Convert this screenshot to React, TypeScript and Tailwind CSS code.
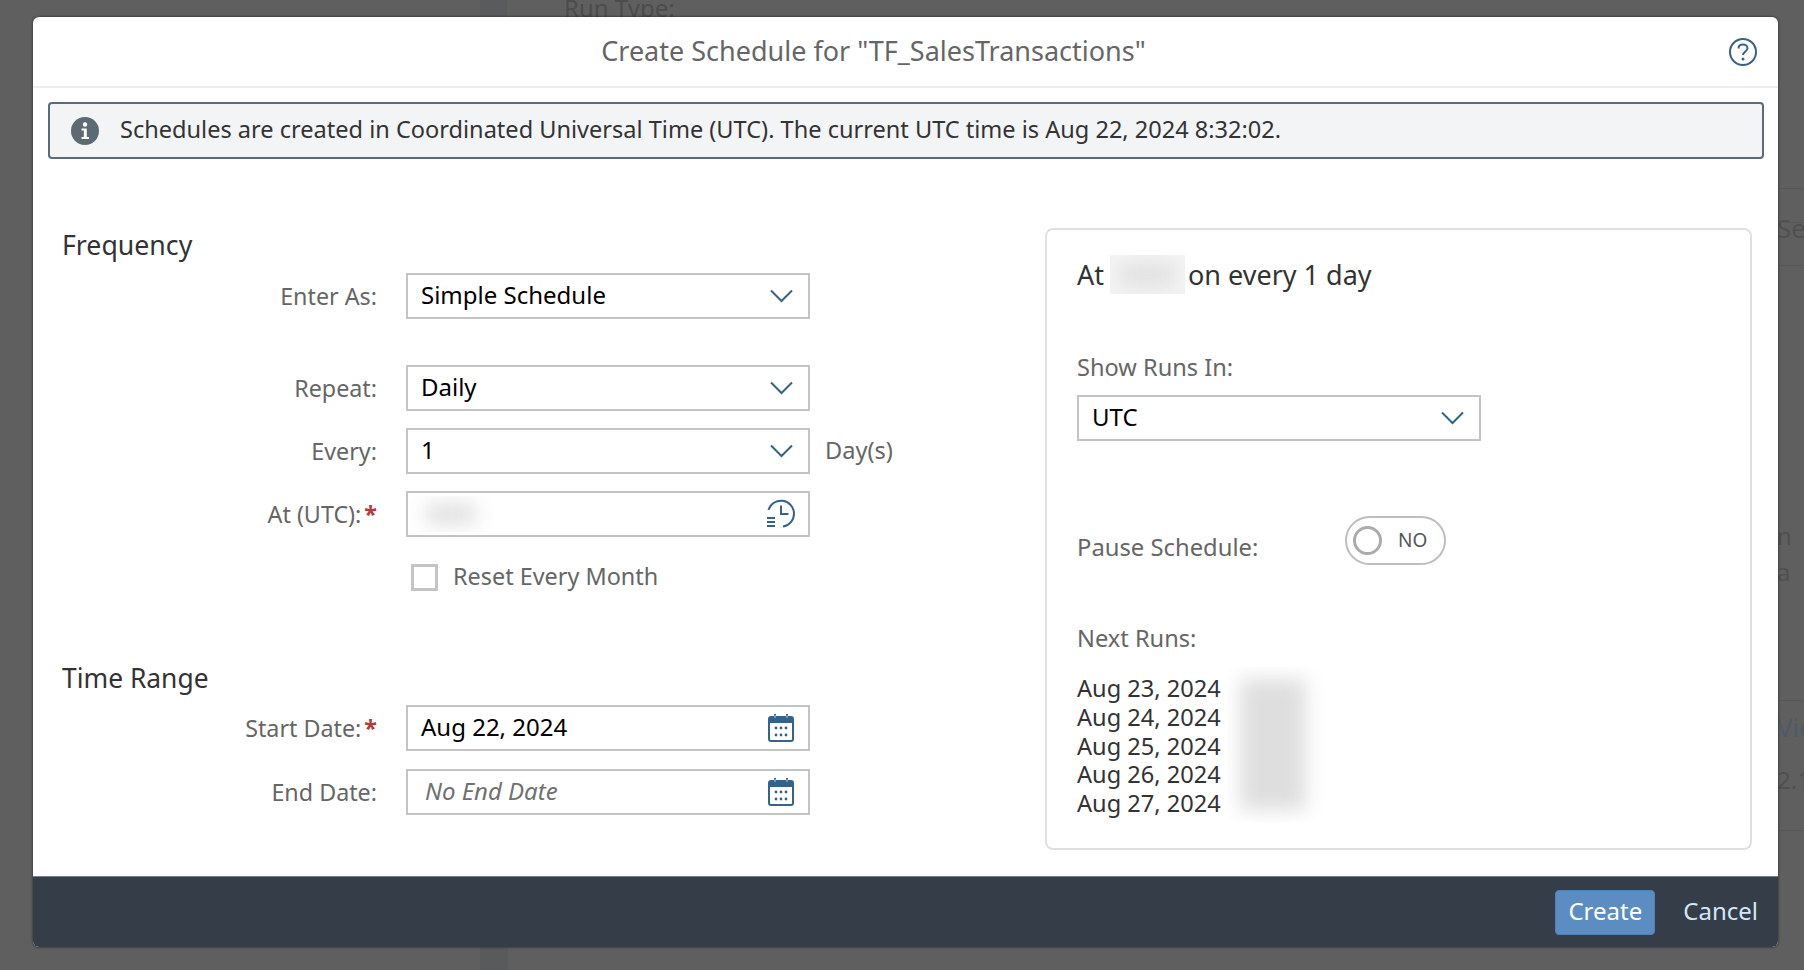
import type { ReactNode } from 'react'

const FONT = "font-['Noto_Sans',sans-serif]"

function Chevron() {
  return (
    <svg width="23" height="14" viewBox="0 0 23 14" fill="none" className="mr-[1px] shrink-0">
      <path d="M1 1.5 L11.5 12 L22 1.5" stroke="#33628d" strokeWidth="2" />
    </svg>
  )
}

function ClockIcon() {
  return (
    <svg width="30" height="30" viewBox="0 0 30 30" fill="none" className="mr-[-2px] shrink-0">
      <path d="M2.5 11 A13 13 0 1 1 17 27.5" stroke="#33628d" strokeWidth="2" />
      <path d="M15 6.5 V15 H22.5" stroke="#33628d" strokeWidth="2" />
      <path d="M1 19 H9 M1 23 H9 M1 27 H9" stroke="#33628d" strokeWidth="2" />
    </svg>
  )
}

function CalendarIcon() {
  const dots = [9, 14, 19]
  return (
    <svg width="28" height="30" viewBox="0 0 28 30" fill="none" className="mr-[-1px] shrink-0">
      <rect x="2" y="4" width="24" height="24" rx="2" stroke="#33628d" strokeWidth="2" />
      <rect x="2" y="4" width="24" height="6" fill="#33628d" />
      <path d="M8 1 V6 M20 1 V6" stroke="#33628d" strokeWidth="2" />
      <path d="M8 2 V5 M20 2 V5" stroke="#ffffff" strokeWidth="0.7" />
      {dots.map((x) => (
        <g key={x}>
          <circle cx={x} cy="15" r="1.4" fill="#33628d" />
          <circle cx={x} cy="22" r="1.4" fill="#33628d" />
        </g>
      ))}
    </svg>
  )
}

function Field({ children, icon }: { children?: ReactNode; icon: ReactNode }) {
  return (
    <div className="flex h-[46px] w-[404px] shrink-0 items-center justify-between border-2 border-[#c4c4c4] bg-white pl-[13px] pr-[14px] text-[24px] text-black">
      <span className="flex-1 pb-[2px]">{children}</span>
      {icon}
    </div>
  )
}

function Row({ label, required, children, className }: { label: string; required?: boolean; children: ReactNode; className?: string }) {
  return (
    <div className={`flex h-[46px] items-center ${className ?? ''}`}>
      <div className="flex w-[315px] shrink-0 items-center justify-end text-[23.3px] text-[#666666]">
        <span>{label}</span>
        {required && <span className="ml-[3px] font-bold text-[#b73a3a]">*</span>}
      </div>
      <div className="ml-[29px]">{children}</div>
    </div>
  )
}

function BlurPatch({ className, spot }: { className: string; spot: string }) {
  return (
    <div className={`overflow-hidden ${className}`}>
      <div className={`bg-[#dedede] blur-[10px] ${spot}`} />
    </div>
  )
}

const nextRuns = ['Aug 23, 2024', 'Aug 24, 2024', 'Aug 25, 2024', 'Aug 26, 2024', 'Aug 27, 2024']

export default function App() {
  return (
    <div className={`relative h-[970px] w-[1804px] overflow-hidden bg-[#5f5f5f] ${FONT}`}>
      {/* page behind the dialog */}
      <div className="absolute left-[480px] top-0 h-[17px] w-[27px] bg-[#595b5d]" />
      <div className="absolute left-[480px] top-[947px] h-[23px] w-[28px] bg-[#595a5b]" />
      <div className="absolute left-[564px] top-[-10px] text-[24px] text-[#4c4c4c]">Run Type:</div>
      <div className="absolute left-[1777px] top-[209px] text-[26px] text-[#505050]">Sea</div>
      <div className="absolute left-[1777px] top-[518px] text-[24px] text-[#505050]">n a</div>
      <div className="absolute left-[1777px] top-[708px] text-[26px] text-[#505a66]">View</div>
      <div className="absolute left-[1777px] top-[762px] text-[24px] text-[#505050]">2.1</div>
      <div className="absolute left-[1779px] top-[188px] h-px w-[25px] bg-[#585858]" />
      <div className="absolute left-[1779px] top-[222px] h-px w-[25px] bg-[#585858]" />
      <div className="absolute left-[1779px] top-[265px] h-px w-[25px] bg-[#585858]" />
      <div className="absolute left-[1779px] top-[700px] h-px w-[25px] bg-[#585858]" />
      <div className="absolute left-[1779px] top-[830px] h-px w-[25px] bg-[#585858]" />

      {/* dialog */}
      <div className="absolute left-[33px] top-[17px] flex h-[930px] w-[1745px] flex-col overflow-hidden rounded-[6px] bg-white shadow-[0_0_3px_rgba(0,0,0,0.6)]">
        <div className="relative flex h-[71px] shrink-0 items-center justify-center border-b-2 border-[#eeeeee] pr-[64px]">
          <h1 className="text-[27px] font-normal text-[#666666]">Create Schedule for "TF_SalesTransactions"</h1>
          <svg width="30" height="30" viewBox="0 0 30 30" fill="none" className="absolute right-[20px] top-[20px]">
            <circle cx="15" cy="15" r="13" stroke="#33628d" strokeWidth="2" />
            <path d="M10.5 11.5 C10.5 8.5 12.5 7.5 15 7.5 C17.5 7.5 19.5 9 19.5 11.3 C19.5 14.5 15 14.5 15 18" stroke="#33628d" strokeWidth="2" />
            <circle cx="15" cy="22" r="1.5" fill="#33628d" />
          </svg>
        </div>

        <div className="ml-[15px] mr-[14px] mt-[14px] flex h-[57px] shrink-0 items-center rounded-[4px] border-2 border-[#5d6b77] bg-[#f3f4f6] pl-[20px]">
          <svg width="30" height="30" viewBox="0 0 30 30" className="shrink-0">
            <circle cx="15" cy="15" r="14" fill="#5c6a74" />
            <circle cx="15" cy="8.5" r="2.2" fill="#ffffff" />
            <path d="M11.5 12.5 H16.8 V21 H19 V23 H11.5 V21 H13.8 V14.5 H11.5 Z" fill="#ffffff" />
          </svg>
          <span className="ml-[20px] pb-[2px] text-[23.55px] text-[#333333]">
            Schedules are created in Coordinated Universal Time (UTC). The current UTC time is Aug 22, 2024 8:32:02.
          </span>
        </div>

        <div className="flex flex-1 items-start pt-[69px]">
          <div className="w-[1012px] shrink-0 pl-[29px]">
            <h2 className="h-[34px] text-[26.7px] font-normal leading-[34px] text-[#333333]">Frequency</h2>
            <Row label="Enter As:" className="mt-[11px]">
              <Field icon={<Chevron />}>Simple Schedule</Field>
            </Row>
            <Row label="Repeat:" className="mt-[46px]">
              <Field icon={<Chevron />}>Daily</Field>
            </Row>
            <Row label="Every:" className="mt-[17px]">
              <div className="flex items-center">
                <Field icon={<Chevron />}>1</Field>
                <span className="ml-[15px] pb-[1px] text-[23.6px] text-[#666666]">Day(s)</span>
              </div>
            </Row>
            <Row label="At (UTC):" required className="mt-[17px]">
              <div className="relative">
                <Field icon={<ClockIcon />} />
                <BlurPatch
                  className="absolute left-[4px] top-[5px] h-[36px] w-[90px]"
                  spot="ml-[16px] mt-[8px] h-[20px] w-[50px]"
                />
              </div>
            </Row>
            <div className="mt-[17px] flex h-[46px] items-center pl-[349px]">
              <div className="h-[27px] w-[27px] border-[3px] border-[#c4c4c4]" />
              <span className="ml-[15px] text-[23.4px] text-[#666666]">Reset Every Month</span>
            </div>
            <h2 className="mt-[60px] h-[36px] text-[26.4px] font-normal leading-[36px] text-[#333333]">Time Range</h2>
            <Row label="Start Date:" required className="mt-[9px]">
              <Field icon={<CalendarIcon />}>Aug 22, 2024</Field>
            </Row>
            <Row label="End Date:" className="mt-[18px]">
              <Field icon={<CalendarIcon />}>
                <span className="pl-[4px] italic text-[#707070]">No End Date</span>
              </Field>
            </Row>
          </div>

          <div className="h-[622px] w-[707px] shrink-0 rounded-[8px] border-2 border-[#e0e0e0] pl-[30px] pt-[27px]">
            <div className="flex h-[36px] items-center text-[27px] text-[#333333]">
              <span>At</span>
              <BlurPatch className="ml-[6px] mt-[-2px] h-[39px] w-[75px] bg-[#f4f4f4]" spot="ml-[10px] mt-[10px] h-[20px] w-[55px]" />
              <span className="ml-[3px]">on every 1 day</span>
            </div>
            <div className="mt-[59px] h-[30px] text-[23.6px] leading-[30px] text-[#666666]">Show Runs In:</div>
            <div className="mt-[13px]">
              <Field icon={<Chevron />}>UTC</Field>
            </div>
            <div className="relative mt-[91px] h-[30px] text-[23.8px] leading-[30px] text-[#666666]">
              Pause Schedule:
              <div className="absolute left-[268px] top-[-16px] flex h-[49px] w-[101px] items-center rounded-full border-2 border-[#bdbdbd] bg-white pl-[6px]">
                <div className="h-[29px] w-[29px] rounded-full border-[3px] border-[#ababab]" />
                <span className="ml-[16px] pb-[1px] text-[19px] text-[#555555]">NO</span>
              </div>
            </div>
            <div className="mt-[61px] h-[30px] text-[23.6px] leading-[30px] text-[#666666]">Next Runs:</div>
            <div className="mt-[21px] flex">
              <div className="text-[23.6px] leading-[28.8px] text-[#333333]">
                {nextRuns.map((run) => (
                  <div key={run}>{run}</div>
                ))}
              </div>
              <BlurPatch className="ml-[7px] mt-[-7px] h-[155px] w-[100px]" spot="ml-[12px] mt-[12px] h-[131px] w-[66px]" />
            </div>
          </div>
        </div>

        <div className="flex h-[71px] shrink-0 items-center justify-end border-t border-[#74828f] bg-[#343d48] pr-[20px]">
          <button className="h-[45px] w-[100px] rounded-[4px] border border-[#4f81b8] bg-[#5b8dc2] pb-[2px] text-center text-[24px] text-white">
            Create
          </button>
          <button className="ml-[28px] pb-[2px] text-[24px] text-[#d5e6f7]">Cancel</button>
        </div>
      </div>
    </div>
  )
}
